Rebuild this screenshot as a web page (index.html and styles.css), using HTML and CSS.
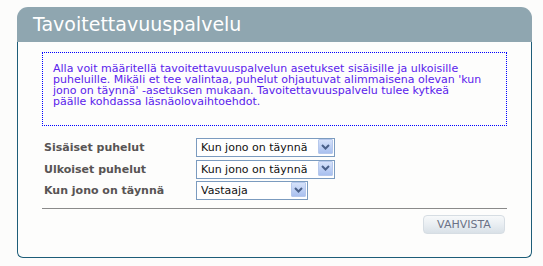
FILE: index.html
```html
<!DOCTYPE html>
<html lang="fi">
<head>
<meta charset="utf-8">
<title>Tavoitettavuuspalvelu</title>
<link rel="stylesheet" href="styles.css">
</head>
<body>
<div class="panel">
  <div class="panel-head">Tavoitettavuuspalvelu</div>
  <div class="panel-body">
    <div class="info">Alla voit määritellä tavoitettavuuspalvelun asetukset sisäisille ja ulkoisille puheluille. Mikäli et tee valintaa, puhelut ohjautuvat alimmaisena olevan 'kun<br>jono on täynnä' -asetuksen mukaan. Tavoitettavuuspalvelu tulee kytkeä<br>päälle kohdassa läsnäolovaihtoehdot.</div>
    <div class="form">
      <label class="lbl" for="s1">Sisäiset puhelut</label>
      <div class="sel wide">
        <select id="s1"><option>Kun jono on täynnä</option></select>
        <span class="arrow"><svg width="9" height="6" viewBox="0 0 9 6"><path d="M1 1 L4.5 4.5 L8 1" fill="none" stroke="#4a6089" stroke-width="2"/></svg></span>
      </div>
      <label class="lbl" for="s2">Ulkoiset puhelut</label>
      <div class="sel wide">
        <select id="s2"><option>Kun jono on täynnä</option></select>
        <span class="arrow"><svg width="9" height="6" viewBox="0 0 9 6"><path d="M1 1 L4.5 4.5 L8 1" fill="none" stroke="#4a6089" stroke-width="2"/></svg></span>
      </div>
      <label class="lbl" for="s3">Kun jono on täynnä</label>
      <div class="sel narrow">
        <select id="s3"><option>Vastaaja</option></select>
        <span class="arrow"><svg width="9" height="6" viewBox="0 0 9 6"><path d="M1 1 L4.5 4.5 L8 1" fill="none" stroke="#4a6089" stroke-width="2"/></svg></span>
      </div>
    </div>
    <div class="rule"></div>
    <div class="actions">
      <button class="btn" type="button">VAHVISTA</button>
    </div>
  </div>
</div>
</body>
</html>
```
FILE: styles.css
```css
html, body {
  margin: 0;
  padding: 0;
}
body {
  background: #fcfcfb;
  font-family: "DejaVu Sans", Verdana, sans-serif;
  font-size: 11px;
  width: 543px;
  height: 266px;
  overflow: hidden;
  padding-top: 7px;
  box-sizing: border-box;
}
.panel {
  margin-left: 17px;
  width: 515px;
}
.panel-head {
  height: 35px;
  background: #8fa6b0;
  border-radius: 11px 11px 0 0;
  color: #ffffff;
  font-size: 19px;
  line-height: 35px;
  padding-left: 16px;
}
.panel-body {
  border: 1px solid #1d5d78;
  border-top: none;
  border-radius: 0 0 6px 6px;
  background: #fdfdfc;
  height: 216px;
  box-sizing: border-box;
  padding: 10px 24px 0 24px;
}
.info {
  border: 1px dotted #0000ff;
  color: #5a22ec;
  line-height: 11px;
  padding: 10px 2px 18px 10px;
  height: 74px;
  box-sizing: border-box;
}
.form {
  margin-top: 12px;
  display: grid;
  grid-template-columns: 152px auto;
  row-gap: 2.5px;
  align-items: center;
  padding-left: 2px;
}
.lbl {
  font-weight: bold;
  color: #585454;
}
.sel {
  position: relative;
  height: 19px;
}
.sel.wide { width: 139px; }
.sel.narrow { width: 112px; }
.sel select {
  appearance: none;
  -webkit-appearance: none;
  width: 100%;
  height: 19px;
  box-sizing: border-box;
  border: 1px solid #7b9bbf;
  border-radius: 0;
  background: #ffffff;
  font-family: "DejaVu Sans", Verdana, sans-serif;
  font-size: 11px;
  color: #111111;
  padding: 0 0 0 4px;
  margin: 0;
  outline: none;
}
.arrow {
  position: absolute;
  right: 2px;
  top: 1px;
  width: 15px;
  height: 15px;
  box-sizing: border-box;
  border: 1px solid #b6c8ec;
  border-radius: 1px;
  background: linear-gradient(#d6e2fa, #a9c0ef);
  display: flex;
  align-items: center;
  justify-content: center;
  pointer-events: none;
}
.rule {
  margin-top: 8px;
  height: 1px;
  background: #8a8a8a;
}
.actions {
  display: flex;
  justify-content: flex-end;
  padding-right: 2px;
  margin-top: 6px;
}
.btn {
  width: 82px;
  height: 19px;
  border: 1px solid #d6dde3;
  border-radius: 4px;
  background: linear-gradient(#f7f9fa, #e9eef2 50%, #d9e1e7);
  color: #6b7286;
  font-family: "DejaVu Sans", Verdana, sans-serif;
  font-size: 11px;
  padding: 0;
  line-height: 17px;
}
```
